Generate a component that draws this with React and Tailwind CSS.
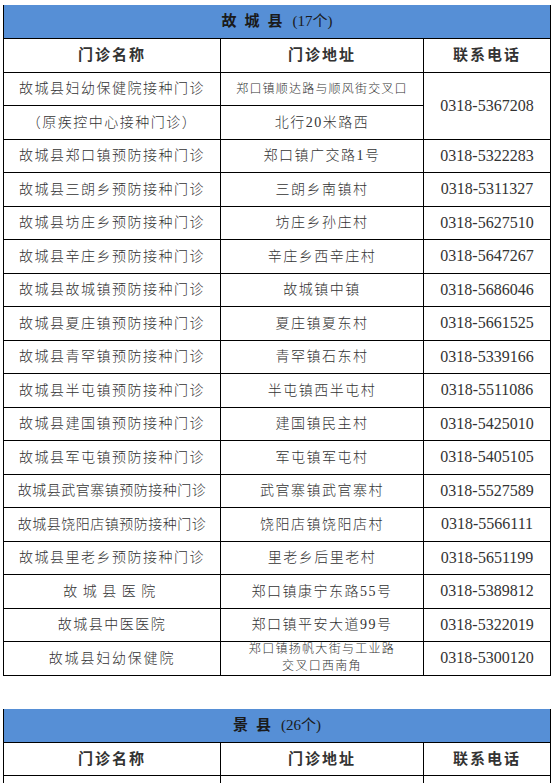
import React from "react";

const rows = [
  { name: "故城县郑口镇预防接种门诊", addr: "郑口镇广交路1号", tel: "0318-5322283" },
  { name: "故城县三朗乡预防接种门诊", addr: "三朗乡南镇村", tel: "0318-5311327" },
  { name: "故城县坊庄乡预防接种门诊", addr: "坊庄乡孙庄村", tel: "0318-5627510" },
  { name: "故城县辛庄乡预防接种门诊", addr: "辛庄乡西辛庄村", tel: "0318-5647267" },
  { name: "故城县故城镇预防接种门诊", addr: "故城镇中镇", tel: "0318-5686046" },
  { name: "故城县夏庄镇预防接种门诊", addr: "夏庄镇夏东村", tel: "0318-5661525" },
  { name: "故城县青罕镇预防接种门诊", addr: "青罕镇石东村", tel: "0318-5339166" },
  { name: "故城县半屯镇预防接种门诊", addr: "半屯镇西半屯村", tel: "0318-5511086" },
  { name: "故城县建国镇预防接种门诊", addr: "建国镇民主村", tel: "0318-5425010" },
  { name: "故城县军屯镇预防接种门诊", addr: "军屯镇军屯村", tel: "0318-5405105" },
  { name: "故城县武官寨镇预防接种门诊", addr: "武官寨镇武官寨村", tel: "0318-5527589", tight: true },
  { name: "故城县饶阳店镇预防接种门诊", addr: "饶阳店镇饶阳店村", tel: "0318-5566111", tight: true },
  { name: "故城县里老乡预防接种门诊", addr: "里老乡后里老村", tel: "0318-5651199" },
  { name: "故城县医院", addr: "郑口镇康宁东路55号", tel: "0318-5389812", wide: true },
  { name: "故城县中医医院", addr: "郑口镇平安大道99号", tel: "0318-5322019" },
];

const cell = "flex items-center justify-center border-r border-b border-black text-[#333] whitespace-nowrap";
const nameCls = "text-[14px] font-light tracking-[1.5px]";
const addrCls = "text-[14px] font-light tracking-[1.5px]";
const telCls = "text-[16px] text-[#3a3a3a]";

function Title({ children }) {
  return (
    <div className="flex items-center justify-center bg-[#568fd6] border-b border-r border-black h-[34px]">
      {children}
    </div>
  );
}

function HeaderRow() {
  const h = `${cell} text-[15px] font-bold tracking-[2px] text-[#222]`;
  return (
    <>
      <div className={h}>门诊名称</div>
      <div className={h}>门诊地址</div>
      <div className={h}>联系电话</div>
    </>
  );
}

export default function App() {
  return (
    <div className="bg-white w-[558px] h-[783px] overflow-hidden font-['Liberation_Serif','Noto_Sans_CJK_SC',serif] pt-[5px] pl-[3px]">
      {/* 故城县 */}
      <div className="w-[548px] border-l border-black">
        <Title>
          <span className="text-[15px] font-bold text-[#1a1a1a] tracking-[8px]">故城县</span>
          <span className="text-[15px] text-[#1a1a1a] ml-[2px]">(17个)</span>
        </Title>
        <div className="grid grid-cols-[217px_203px_127px] auto-rows-[33.5px]">
          <HeaderRow />
          <div className={`${cell} ${nameCls}`}>故城县妇幼保健院接种门诊</div>
          <div className={`${cell} text-[12px] font-light tracking-[1.2px]`}>郑口镇顺达路与顺风街交叉口</div>
          <div className={`${cell} ${telCls} row-span-2`}>0318-5367208</div>
          <div className={`${cell} ${nameCls}`}>（原疾控中心接种门诊）</div>
          <div className={`${cell} ${addrCls}`}>北行20米路西</div>
          {rows.map((r) => (
            <React.Fragment key={r.name}>
              <div
                className={`${cell} text-[14px] font-light ${
                  r.tight ? "tracking-[0.5px]" : r.wide ? "tracking-[5.5px]" : "tracking-[1.5px]"
                }`}
              >
                {r.name}
              </div>
              <div className={`${cell} ${addrCls}`}>{r.addr}</div>
              <div className={`${cell} ${telCls}`}>{r.tel}</div>
            </React.Fragment>
          ))}
          <div className={`${cell} text-[14px] font-light tracking-[1.8px]`}>故城县妇幼保健院</div>
          <div className={`${cell} flex-col text-[12px] font-light tracking-[1.3px] leading-[17px]`}>
            <span>郑口镇扬帆大街与工业路</span>
            <span>交叉口西南角</span>
          </div>
          <div className={`${cell} ${telCls}`}>0318-5300120</div>
        </div>
      </div>

      {/* 景县 */}
      <div className="w-[548px] border-l border-black mt-[33px]">
        <Title>
          <span className="text-[15px] font-bold text-[#1a1a1a] tracking-[8px]">景县</span>
          <span className="text-[15px] text-[#1a1a1a] ml-[2px]">(26个)</span>
        </Title>
        <div className="grid grid-cols-[217px_203px_127px] auto-rows-[33.5px]">
          <HeaderRow />
          <div className={cell}></div>
          <div className={cell}></div>
          <div className={cell}></div>
        </div>
      </div>
    </div>
  );
}
